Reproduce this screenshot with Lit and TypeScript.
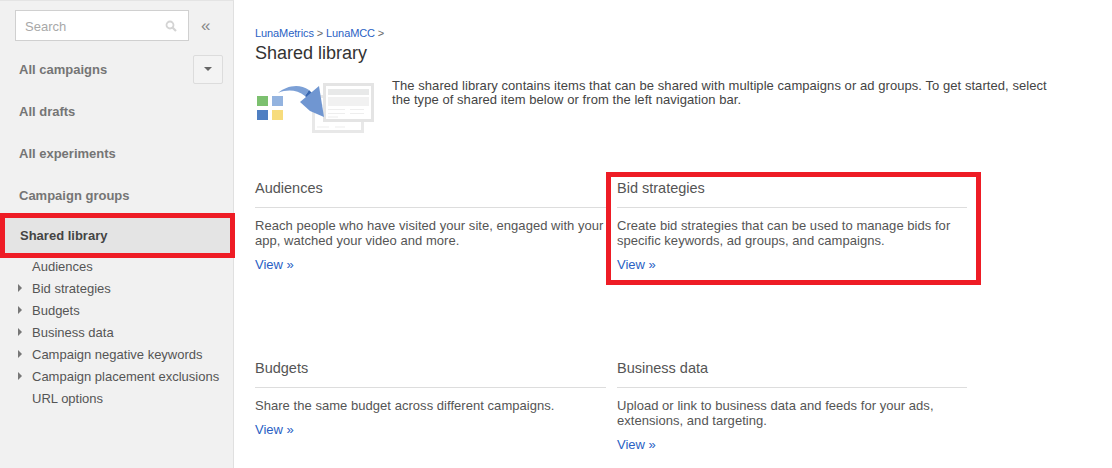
import { LitElement, css, html } from 'lit';
import { customElement } from 'lit/decorators.js';

const navItems = [
  { label: 'Audiences', arrow: false },
  { label: 'Bid strategies', arrow: true },
  { label: 'Budgets', arrow: true },
  { label: 'Business data', arrow: true },
  { label: 'Campaign negative keywords', arrow: true },
  { label: 'Campaign placement exclusions', arrow: true },
  { label: 'URL options', arrow: false },
];

const cards = [
  { title: 'Audiences', text: 'Reach people who have visited your site, engaged with your app, watched your video and more.' },
  { title: 'Bid strategies', text: 'Create bid strategies that can be used to manage bids for specific keywords, ad groups, and campaigns.' },
  { title: 'Budgets', text: 'Share the same budget across different campaigns.' },
  { title: 'Business data', text: 'Upload or link to business data and feeds for your ads, extensions, and targeting.' },
];

@customElement('app-root')
export class AppRoot extends LitElement {
  static styles = css`
    :host {
      display: block;
      position: relative;
      width: 1112px;
      height: 468px;
      overflow: hidden;
      background: #fff;
      font-family: 'Liberation Sans', Arial, sans-serif;
      font-size: 13px;
      color: #444;
    }

    .page {
      display: flex;
      height: 100%;
    }

    .sidebar {
      box-sizing: border-box;
      width: 234px;
      height: 100%;
      flex: none;
      background: #f1f1f1;
      border-top: 1px solid #e4e4e4;
      border-right: 1px solid #e0e0e0;
    }

    .search-row {
      display: flex;
      align-items: center;
      padding: 9px 0 0 15px;
    }

    .search {
      box-sizing: border-box;
      display: flex;
      align-items: center;
      justify-content: space-between;
      width: 174px;
      height: 31px;
      padding: 1px 11px 0 9px;
      background: #fff;
      border: 1px solid #d0d0d0;
      color: #a8a8a8;
    }

    .collapse {
      margin-left: 12px;
      font-size: 17px;
      line-height: 17px;
      color: #888;
    }

    .top-item {
      display: flex;
      align-items: center;
      justify-content: space-between;
      height: 42px;
      padding: 0 10px 0 19px;
      font-weight: bold;
      color: #757575;
    }

    .top-items {
      padding-top: 7px;
    }

    .dropdown {
      box-sizing: border-box;
      display: flex;
      align-items: center;
      justify-content: center;
      width: 30px;
      height: 29px;
      background: #f3f3f3;
      border: 1px solid #dcdcdc;
      border-radius: 2px;
    }

    .dropdown i {
      border-left: 4px solid transparent;
      border-right: 4px solid transparent;
      border-top: 4px solid #666;
    }

    .top-item.active {
      height: 45px;
      margin: -3px -1px 0 0;
      padding-left: 20px;
      background: #e4e4e4;
      color: #444;
    }

    .sub {
      margin: -3px 0 0;
      padding: 0;
      list-style: none;
    }

    .sub li {
      display: flex;
      align-items: center;
      height: 22px;
      padding-left: 18px;
      color: #555;
    }

    .sub li span {
      margin-left: 14px;
      white-space: nowrap;
    }

    .sub li i {
      width: 0;
      margin-right: -4px;
      border-top: 4px solid transparent;
      border-bottom: 4px solid transparent;
      border-left: 4px solid #777;
    }

    .main {
      flex: 1;
      padding: 26px 0 0 21px;
    }

    .crumbs {
      font-size: 11px;
      line-height: 14px;
      letter-spacing: -0.1px;
      color: #666;
    }

    a {
      color: #2a5fc4;
      text-decoration: none;
    }

    h1 {
      margin: 2px 0 0;
      font-size: 18px;
      line-height: 22px;
      font-weight: normal;
      color: #333;
    }

    .intro {
      display: flex;
      margin-top: 11px;
      height: 100px;
    }

    .intro svg {
      flex: none;
    }

    .intro p {
      width: 670px;
      margin: 4px 0 0 15px;
      line-height: 14px;
      letter-spacing: 0.06px;
      color: #444;
    }

    .cards {
      display: grid;
      grid-template-columns: 351px 350px;
      grid-auto-rows: 180px;
      column-gap: 11px;
    }

    .card h2 {
      margin: 0;
      height: 32px;
      font-size: 14.5px;
      line-height: 26px;
      font-weight: normal;
      color: #555;
      border-bottom: 1px solid #ddd;
    }

    .card p {
      margin: 10px 0 9px;
      line-height: 15px;
      letter-spacing: 0.04px;
      color: #555;
    }

    .mark {
      position: absolute;
      box-sizing: border-box;
      border: 5px solid #ee1c25;
      pointer-events: none;
    }

    .mark-nav {
      left: 0;
      top: 213px;
      width: 235px;
      height: 45px;
    }

    .mark-card {
      left: 606px;
      top: 172px;
      width: 375px;
      height: 113px;
    }
  `;

  private renderIllustration() {
    return html`
      <svg width="122" height="66" viewBox="0 0 122 66">
        <rect x="58.5" y="21.5" width="49" height="35" fill="#fff" stroke="#e8e8e8" stroke-width="3"></rect>
        <path d="M62 30h6M62 34h6M62 52h12M80 52h10" stroke="#eee" stroke-width="1.2"></path>
        <rect x="69.5" y="9.5" width="48" height="36" fill="#fff" stroke="#e4e4e4" stroke-width="3"></rect>
        <rect x="73" y="14" width="41" height="6" fill="#e8e9e9"></rect>
        <rect x="73" y="22" width="41" height="9" fill="#f1f1f1"></rect>
        <path d="M73 34.5h17M95 34.5h14M73 38.5h17M95 38.5h14M73 42h10" stroke="#eee" stroke-width="1.2"></path>
        <rect x="2" y="21" width="11" height="10" fill="#7cc06f"></rect>
        <rect x="17" y="21" width="11" height="10" fill="#93b3df"></rect>
        <rect x="2" y="35" width="11" height="10" fill="#4f7fc2"></rect>
        <rect x="17" y="35" width="11" height="10" fill="#f7dc7c"></rect>
        <path d="M23 18C31 11 44 8 54 15L50 21C42 15 33 14 23 18Z" fill="#7ca0d6"></path>
        <path d="M50 21L54 15L57 18L52 23Z" fill="#3766b0"></path>
        <path d="M45 27L64 11L69 42L55 36Z" fill="#7096d1"></path>
      </svg>
    `;
  }

  render() {
    return html`
      <div class="page">
        <nav class="sidebar">
          <div class="search-row">
            <div class="search">
              <span>Search</span>
              <svg width="12" height="12" viewBox="0 0 12 12" fill="none" stroke="#d4d4d4">
                <circle cx="5" cy="5" r="3.5" stroke-width="1.8"></circle>
                <path d="M7.5 7.5L11 11" stroke-width="2.2"></path>
              </svg>
            </div>
            <span class="collapse">«</span>
          </div>
          <div class="top-items">
            <div class="top-item">All campaigns<span class="dropdown"><i></i></span></div>
            <div class="top-item">All drafts</div>
            <div class="top-item">All experiments</div>
            <div class="top-item">Campaign groups</div>
            <div class="top-item active">Shared library</div>
          </div>
          <ul class="sub">
            ${navItems.map(
              (item) => html`<li>${item.arrow ? html`<i></i>` : ''}<span>${item.label}</span></li>`
            )}
          </ul>
        </nav>
        <main class="main">
          <div class="crumbs"><a>LunaMetrics</a> &gt; <a>LunaMCC</a> &gt;</div>
          <h1>Shared library</h1>
          <div class="intro">
            ${this.renderIllustration()}
            <p>The shared library contains items that can be shared with multiple campaigns or ad groups. To get started, select the type of shared item below or from the left navigation bar.</p>
          </div>
          <div class="cards">
            ${cards.map(
              (card) => html`
                <section class="card">
                  <h2>${card.title}</h2>
                  <p>${card.text}</p>
                  <a>View »</a>
                </section>
              `
            )}
          </div>
        </main>
      </div>
      <div class="mark mark-nav"></div>
      <div class="mark mark-card"></div>
    `;
  }
}
